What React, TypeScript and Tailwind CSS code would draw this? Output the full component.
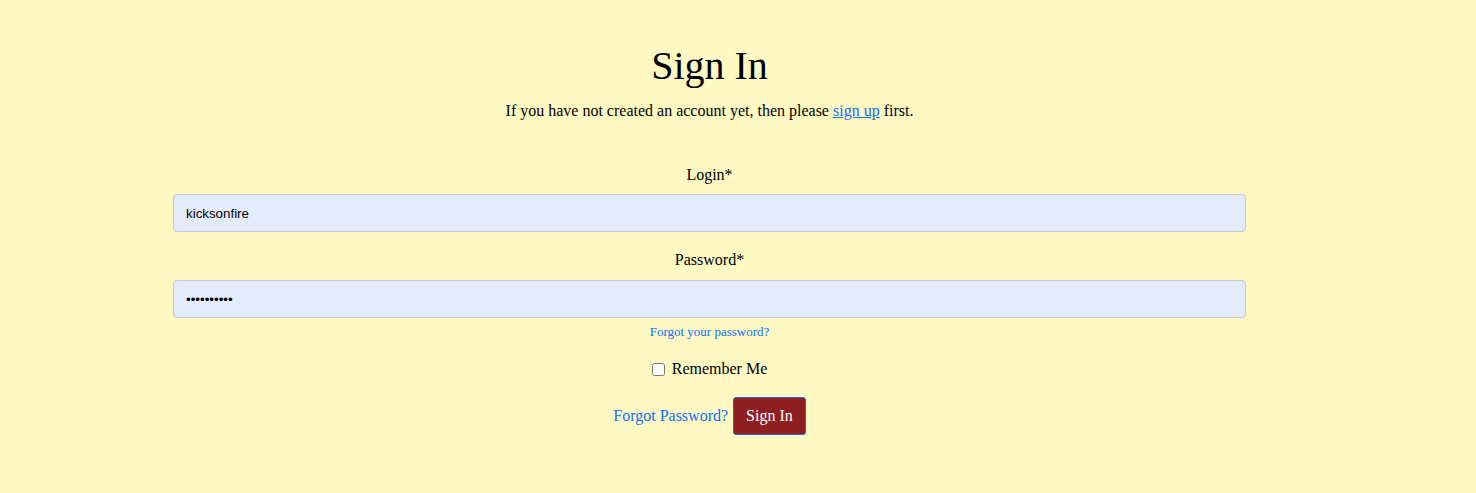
import { useState } from 'react';

/**
 * SignIn - simple sign in form page.
 */
export default function App() {
  const [login, setLogin] = useState<string>('kicksonfire');
  const [password, setPassword] = useState<string>('••••••••••');
  const [remember, setRemember] = useState<boolean>(false);

  return (
    <div className="min-h-screen w-full bg-[#fef9c3] font-['Liberation_Serif','Times_New_Roman',serif] text-black">
      <div className="pl-[173px] pr-[230px] pt-[43px] pb-[58px]">
        <h1 className="text-center text-[40px] leading-[46px] font-normal">Sign In</h1>
        <p className="mt-[13px] text-center text-[16px] leading-[18px]">
          If you have not created an account yet, then please{' '}
          <a href="#" className="text-[#0d6efd] underline">
            sign up
          </a>{' '}
          first.
        </p>

        <form className="mt-[46px] flex flex-col" onSubmit={(e) => e.preventDefault()}>
          <label className="text-center text-[16px] leading-[18px]">Login*</label>
          <input
            className="mt-[10px] h-[38px] w-full rounded-[4px] border border-[#c4c8cf] bg-[#e4ebfb] px-3 font-['Liberation_Sans',Arial,sans-serif] text-[13.33px] text-black outline-none"
            value={login}
            onChange={(e) => setLogin(e.target.value)}
          />

          <label className="mt-[19px] text-center text-[16px] leading-[18px]">Password*</label>
          <input
            className="mt-[11px] h-[38px] w-full rounded-[4px] border border-[#c4c8cf] bg-[#e4ebfb] px-3 font-['Liberation_Sans',Arial,sans-serif] text-[13.33px] text-black outline-none"
            value={password}
            onChange={(e) => setPassword(e.target.value)}
          />
          <a href="#" className="mt-[6px] self-center text-[13px] leading-[15px] text-[#0d6efd]">
            Forgot your password?
          </a>

          <label className="mt-[21px] flex items-center justify-center gap-[7px] text-[16px] leading-[18px]">
            <input
              type="checkbox"
              className="h-[13px] w-[13px]"
              checked={remember}
              onChange={(e) => setRemember(e.target.checked)}
            />
            Remember Me
          </label>

          <div className="mt-[19px] flex items-center justify-center gap-[5px]">
            <a href="#" className="text-[16px] leading-[18px] text-[#0d6efd]">
              Forgot Password?
            </a>
            <button
              type="submit"
              className="h-[38px] rounded-[3px] border border-[#3461d6] bg-[#8d1e22] px-3 text-[16px] text-white"
            >
              Sign In
            </button>
          </div>
        </form>
      </div>
    </div>
  );
}
